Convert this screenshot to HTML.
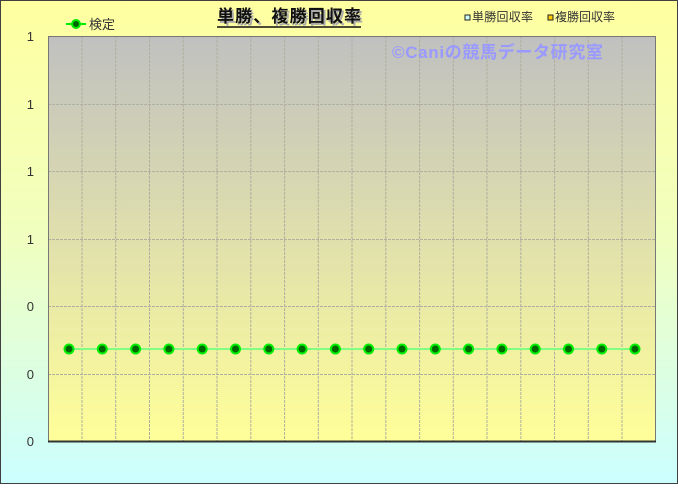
<!DOCTYPE html>
<html><head><meta charset="utf-8"><style>
body{margin:0;width:678px;height:484px;overflow:hidden;font-family:"Liberation Sans","Noto Sans CJK JP",sans-serif}
</style></head><body>
<svg width="678" height="484" xmlns="http://www.w3.org/2000/svg" font-family="Liberation Sans, Noto Sans CJK JP, sans-serif">
<defs>
<linearGradient id="bg" x1="0" y1="0" x2="0" y2="1"><stop offset="0" stop-color="#ffffa0"/><stop offset="0.5" stop-color="#f0ffc0"/><stop offset="1" stop-color="#ccffff"/></linearGradient>
<linearGradient id="pl" x1="0" y1="0" x2="0" y2="1"><stop offset="0" stop-color="#c0c0c0"/><stop offset="1" stop-color="#ffff99"/></linearGradient>
</defs>
<rect x="0.5" y="0.5" width="677" height="483" fill="url(#bg)" stroke="#404040"/>
<rect x="48" y="36" width="608" height="405" fill="url(#pl)"/>
<g stroke="#b0b0a0" stroke-width="1" stroke-dasharray="3,1">
<path d="M48 104.5H656M48 171.5H656M48 239.5H656M48 306.5H656M48 374.5H656"/>
<path d="M82 36V441M115.7 36V441M149.5 36V441M183.3 36V441M217 36V441M250.8 36V441M284.6 36V441M318.3 36V441M352 36V441M385.8 36V441M419.6 36V441M453.3 36V441M487 36V441M520.8 36V441M554.6 36V441M588.3 36V441M622 36V441"/>
</g>
<rect x="48.5" y="36.5" width="607" height="404.5" fill="none" stroke="#777"/>
<path d="M48 441.5H656" stroke="#333" stroke-width="2"/>
<g font-size="13" fill="#333" text-anchor="end">
<text x="34" y="41">1</text><text x="34" y="109">1</text><text x="34" y="176">1</text><text x="34" y="244">1</text><text x="34" y="311">0</text><text x="34" y="379">0</text><text x="34" y="446">0</text>
</g>
<path d="M69 349H635" stroke="#80ff80" stroke-width="2"/>
<g fill="#006600" stroke="#00ee00" stroke-width="2">
<circle cx="69" cy="349" r="4.5"/><circle cx="102.3" cy="349" r="4.5"/><circle cx="135.6" cy="349" r="4.5"/><circle cx="168.9" cy="349" r="4.5"/><circle cx="202.2" cy="349" r="4.5"/><circle cx="235.5" cy="349" r="4.5"/><circle cx="268.8" cy="349" r="4.5"/><circle cx="302.1" cy="349" r="4.5"/><circle cx="335.4" cy="349" r="4.5"/><circle cx="368.7" cy="349" r="4.5"/><circle cx="402" cy="349" r="4.5"/><circle cx="435.3" cy="349" r="4.5"/><circle cx="468.6" cy="349" r="4.5"/><circle cx="501.9" cy="349" r="4.5"/><circle cx="535.2" cy="349" r="4.5"/><circle cx="568.5" cy="349" r="4.5"/><circle cx="601.8" cy="349" r="4.5"/><circle cx="635" cy="349" r="4.5"/>
</g>
<path d="M66 24H86" stroke="#00ee00" stroke-width="2"/>
<circle cx="76" cy="24" r="4" fill="#006600" stroke="#00ee00" stroke-width="2"/>
<text x="89" y="29" font-size="13" fill="#333">検定</text>
<text x="219" y="24" font-size="17" font-weight="bold" fill="#aaa" textLength="144">単勝、複勝回収率</text>
<text x="217" y="22" font-size="17" font-weight="bold" fill="#111" textLength="144">単勝、複勝回収率</text>
<path d="M217 27H361" stroke="#111" stroke-width="1.5"/>
<rect x="465" y="15" width="5" height="5" fill="#ccffff" stroke="#222"/>
<text x="472" y="21" font-size="12" fill="#333" textLength="61">単勝回収率</text>
<rect x="548" y="15" width="5" height="5" fill="#ffcc00" stroke="#222"/>
<text x="555" y="21" font-size="12" fill="#333" textLength="60">複勝回収率</text>
<text x="392" y="58" font-size="17" font-weight="bold" fill="#9999ff" textLength="211">©Caniの競馬データ研究室</text>
</svg>
</body></html>
